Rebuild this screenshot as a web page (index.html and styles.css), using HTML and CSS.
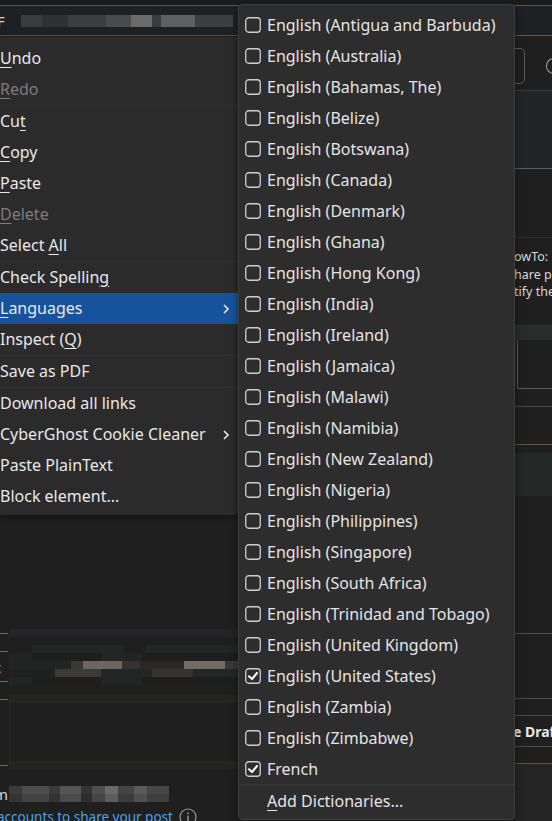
FILE: index.html
```html
<!DOCTYPE html>
<html>
<head>
    <link rel="stylesheet" href="styles.css">
</head>
<body>
    <div class="tabstrip"></div>
    <div class="urlbar">
        <span class="url-letter">F</span>
        <div class="blur url-blur"></div>
    </div>

    <div class="page">
        <!-- left part of the page, mostly under the menus -->
        <div class="pane-left">
            <div class="spacer" style="height: 592px;"></div>
            <div class="lrow h8">
                <span class="tick"></span>
                <div class="band"></div>
            </div>
            <div class="spacer" style="height: 8px;"></div>
            <div class="lrow blur-row">
                <div class="marks">
                    <span class="tick"></span>
                    <span class="cut-char">c</span>
                    <span class="tick"></span>
                </div>
                <div class="blur-grid">
                    <div class="blur row-a"></div>
                    <div class="blur row-b"></div>
                    <div class="blur row-c"></div>
                    <div class="blur row-d"></div>
                    <div class="blur row-b"></div>
                </div>
            </div>
            <div class="spacer" style="height: 10px;"></div>
            <div class="lrow h8">
                <span class="tick"></span>
                <div class="band warm"></div>
            </div>
            <div class="boxed"></div>
            <div class="lrow h8">
                <span class="tick"></span>
                <div class="band warm"></div>
            </div>
            <div class="spacer" style="height: 16px;"></div>
            <div class="lrow name-row">
                <span class="cut-char">m</span>
                <div class="blur name-blur"></div>
            </div>
            <div class="link-row">
                <span class="link">accounts to share your post</span>
                <svg class="info" width="18" height="18" viewBox="0 0 18 18">
                    <circle cx="9" cy="9" r="8" fill="none" stroke="#9a9a9a" stroke-width="1.2"/>
                    <rect x="8.3" y="7.5" width="1.4" height="6" fill="#9a9a9a"/>
                    <circle cx="9" cy="5.2" r="0.9" fill="#9a9a9a"/>
                </svg>
            </div>
        </div>

        <!-- right strip that shows beside the submenu -->
        <div class="pane-right">
            <div class="spacer" style="height: 11px;"></div>
            <div class="input-row">
                <div class="input-end"></div>
                <div class="circle-end"></div>
            </div>
            <div class="rline" style="height: 7px; border-color: #3a3a3a;"></div>
            <div class="rline shaded" style="height: 78px; border-color: #5b5b5b;"></div>
            <div class="rline" style="height: 69px; border-color: #2e2e2e;"></div>
            <div class="rline note" style="height: 88px; border-color: #2e2e2e;">
                <div>owTo:</div>
                <div>hare pi</div>
                <div>tify the</div>
            </div>
            <div class="rband" style="height: 14px;"></div>
            <div class="rbox"></div>
            <div class="rline" style="height: 18px; border-color: #4a4a4a;"></div>
            <div class="rline" style="height: 38px; border-color: #5a5346;"></div>
            <div class="spacer" style="height: 8px;"></div>
            <div class="rband" style="height: 43px; background-color: #262828;"></div>
            <div class="rline" style="height: 138px; border-color: #4d4d4d;"></div>
            <div class="rline" style="height: 65px; border-color: #4d4d4d;"></div>
            <div class="rline" style="height: 17px; border-color: #4d4d4d;"></div>
            <div class="rline draft" style="height: 31px; border-color: #4d4d4d;">e Draft</div>
            <div class="rline" style="height: 17px; border-color: #5a5346;"></div>
            <div class="rfill"></div>
        </div>
    </div>

    <!-- context menu -->
    <div class="menu">
        <div class="item"><u>U</u>ndo</div>
        <div class="item disabled"><u>R</u>edo</div>
        <div class="menu-sep"></div>
        <div class="item">Cu<u>t</u></div>
        <div class="item"><u>C</u>opy</div>
        <div class="item"><u>P</u>aste</div>
        <div class="item disabled"><u>D</u>elete</div>
        <div class="item">Select <u>A</u>ll</div>
        <div class="menu-sep"></div>
        <div class="item">Check Spellin<u>g</u></div>
        <div class="item active"><u>L</u>anguages
            <svg class="chevron" width="8" height="10" viewBox="0 0 8 10"><polyline points="2,1 6,5 2,9" fill="none" stroke="#e8e8e8" stroke-width="1.6"/></svg>
        </div>
        <div class="item">Inspect (<u>Q</u>)</div>
        <div class="menu-sep"></div>
        <div class="item">Save as PDF</div>
        <div class="menu-sep"></div>
        <div class="item">Download all links</div>
        <div class="item">CyberGhost Cookie Cleaner
            <svg class="chevron" width="8" height="10" viewBox="0 0 8 10"><polyline points="2,1 6,5 2,9" fill="none" stroke="#e8e8e8" stroke-width="1.6"/></svg>
        </div>
        <div class="item">Paste PlainText</div>
        <div class="item">Block element...</div>
    </div>

    <!-- languages submenu -->
    <div class="submenu" id="languages"></div>

    <script>
        const languages = [
            { name: "English (Antigua and Barbuda)" },
            { name: "English (Australia)" },
            { name: "English (Bahamas, The)" },
            { name: "English (Belize)" },
            { name: "English (Botswana)" },
            { name: "English (Canada)" },
            { name: "English (Denmark)" },
            { name: "English (Ghana)" },
            { name: "English (Hong Kong)" },
            { name: "English (India)" },
            { name: "English (Ireland)" },
            { name: "English (Jamaica)" },
            { name: "English (Malawi)" },
            { name: "English (Namibia)" },
            { name: "English (New Zealand)" },
            { name: "English (Nigeria)" },
            { name: "English (Philippines)" },
            { name: "English (Singapore)" },
            { name: "English (South Africa)" },
            { name: "English (Trinidad and Tobago)" },
            { name: "English (United Kingdom)" },
            { name: "English (United States)", checked: true },
            { name: "English (Zambia)" },
            { name: "English (Zimbabwe)" },
            { name: "French", checked: true }
        ];

        const tick = '<polyline points="4,8.3 7,11 12,5" fill="none" stroke="#f2f2f2" stroke-width="2.2" stroke-linecap="round" stroke-linejoin="round"/>';

        function buildSubmenu() {
            const menu = document.getElementById('languages');
            languages.forEach(lang => {
                const div = document.createElement('div');
                div.className = 'sub-item';
                div.innerHTML = `
                    <svg class="check" width="16" height="16" viewBox="0 0 16 16">
                        <rect x="0.75" y="0.75" width="14.5" height="14.5" rx="3" fill="none" stroke="#cfcfcf" stroke-width="1.3"/>
                        ${lang.checked ? tick : ''}
                    </svg>
                    <span>${lang.name}</span>
                `;
                menu.appendChild(div);
            });
            const more = document.createElement('div');
            more.className = 'sub-item more';
            more.innerHTML = '<span><u>A</u>dd Dictionaries...</span>';
            menu.appendChild(more);
        }

        buildSubmenu();
    </script>
</body>
</html>
```

FILE: styles.css
```css
body {
    margin: 0;
    padding: 0;
    width: 552px;
    height: 821px;
    overflow: hidden;
    background-color: #1f1f1f;
    font-family: "Noto Sans", sans-serif;
    color: #e6e6e6;
    position: relative;
}

.tabstrip {
    height: 5px;
    background-color: #1b1c1e;
    border-bottom: 1px solid #2e6288;
}

.urlbar {
    height: 29px;
    background-color: #1e2124;
    border-bottom: 1px solid #2e6288;
    display: flex;
    align-items: center;
    gap: 2px;
}

.url-letter {
    font-size: 15px;
    color: #cfcfcf;
    margin-left: -3px;
}

.blur {
    height: 12px;
}

.url-blur {
    width: 212px;
    margin-left: 14px;
    background: linear-gradient(90deg, #3a3c3e 0 10%, #2f3133 10% 22%, #3c3e40 22% 40%, #4a4b4c 40% 52%, #6b6b6b 52% 62%, #3a3b3d 62% 66%, #5e5f60 66% 82%, #3d3e40 82% 100%);
}

.page {
    display: grid;
    grid-template-columns: 514px 38px;
    padding-top: 1px;
}

.pane-left,
.pane-right {
    display: flex;
    flex-direction: column;
}

.spacer {
    flex-shrink: 0;
}

/* left pane */
.lrow {
    display: flex;
    align-items: center;
    flex-shrink: 0;
}

.h8 { height: 8px; }

.tick {
    width: 8px;
    height: 1px;
    background-color: #6a6a6a;
    margin-right: 1px;
    flex-shrink: 0;
}

.band {
    flex: 1;
    height: 8px;
    background-color: #232626;
}

.band.warm {
    background-color: #252521;
}

.blur-row {
    height: 40px;
    align-items: stretch;
}

.marks {
    width: 9px;
    display: flex;
    flex-direction: column;
    justify-content: space-between;
    padding: 6px 0 3px 0;
    box-sizing: border-box;
}

.cut-char {
    width: 9px;
    font-size: 15px;
    line-height: 16px;
    color: #d8d8d8;
    text-indent: -6px;
    overflow: hidden;
    flex-shrink: 0;
}

.blur-grid {
    display: flex;
    flex-direction: column;
}

.blur-grid .blur {
    height: 8px;
    width: 230px;
}

.row-a {
    background: linear-gradient(90deg, #1f1f1f 0 10%, #242626 10% 50%, #1f1f1f 50% 59%, #242626 59% 100%);
}

.row-b {
    background: linear-gradient(90deg, #232525 0 10%, #1e1e1e 10% 40%, #232525 40% 58%, #1e1e1e 58% 100%);
}

.row-c {
    background: linear-gradient(90deg, #232525 0 27%, #3a3935 27% 32%, #6b665e 32% 49%, #35332f 49% 57%, #2a2928 57% 76%, #706b64 76% 94%, #3a3834 94% 100%);
}

.row-d {
    background: linear-gradient(90deg, #1f2020 0 20%, #3c3a36 20% 40%, #242525 40% 62%, #35332f 62% 80%, #252626 80% 100%);
}

.boxed {
    height: 58px;
    margin-left: 9px;
    border-left: 1px solid #2a2a2a;
    flex-shrink: 0;
}

.name-row {
    height: 18px;
    align-items: center;
}

.name-blur {
    width: 160px;
    height: 16px;
    background: linear-gradient(180deg, transparent 0 50%, rgba(0, 0, 0, 0.12) 50% 100%),
        linear-gradient(90deg, #3b3b3b 0 8%, #4c4c4c 8% 25%, #3a3a3a 25% 32%, #555 32% 45%, #333 45% 52%, #4e4e4e 52% 60%, #6a6a6a 60% 68%, #444 68% 78%, #5a5a5a 78% 86%, #474747 86% 100%);
}

.link-row {
    display: flex;
    align-items: center;
    gap: 6px;
    margin-top: 5px;
}

.link {
    font-size: 13.5px;
    color: #4ea3e4;
    margin-left: -3px;
    line-height: 18px;
}

.info {
    flex-shrink: 0;
}

/* right pane */
.rline {
    flex-shrink: 0;
    box-sizing: border-box;
    border-bottom: 1px solid #444;
}

.shaded {
    background-color: #222426;
}

.note {
    padding-top: 10px;
    font-size: 12.5px;
    line-height: 17.5px;
    color: #d6d6d6;
    white-space: nowrap;
    overflow: hidden;
}

.rband {
    flex-shrink: 0;
    background-color: #2a2b2b;
}

.rbox {
    height: 49px;
    margin-left: 3px;
    box-sizing: border-box;
    border-left: 1px solid #5a5a5a;
    border-bottom: 1px solid #5a5a5a;
    flex-shrink: 0;
}

.draft {
    display: flex;
    align-items: center;
    font-size: 14px;
    font-weight: bold;
    color: #e8e8e8;
    white-space: nowrap;
    overflow: hidden;
    text-indent: -1px;
}

.rfill {
    flex: 1;
    background-color: #252525;
}

.input-row {
    height: 36px;
    display: flex;
    align-items: center;
    justify-content: space-between;
    flex-shrink: 0;
}

.input-end {
    width: 16px;
    height: 36px;
    box-sizing: border-box;
    margin-left: -5px;
    border: 1px solid #5c5c5c;
    border-radius: 5px;
}

.circle-end {
    width: 8px;
    height: 16px;
    box-sizing: border-box;
    border: 1.5px solid #a0a0a0;
    border-right: none;
    border-radius: 8px 0 0 8px;
    margin-right: -2px;
}

/* context menu */
.menu {
    position: absolute;
    left: 0;
    top: 37px;
    width: 238px;
    height: 478px;
    box-sizing: border-box;
    padding: 6px 0 3px 0;
    background-color: #2b2b2b;
    border-radius: 0 0 5px 0;
    box-shadow: 0 2px 6px rgba(0, 0, 0, 0.4);
}

.menu-sep {
    height: 1px;
    background-color: #303030;
}

.item {
    height: 31px;
    line-height: 31px;
    font-size: 16px;
    color: #e8e8e8;
    white-space: nowrap;
    position: relative;
}

.item.disabled {
    color: #7c7c7c;
}

.item.active {
    background-color: #17539c;
}

.item u {
    text-underline-offset: 3px;
}

.chevron {
    position: absolute;
    right: 8px;
    top: 11px;
}

/* languages submenu */
.submenu {
    position: absolute;
    left: 238px;
    top: 4px;
    width: 277px;
    height: 816px;
    box-sizing: border-box;
    padding: 4px 0 2px 0;
    background-color: #2d2d2d;
    border: 1px solid #3e3e3e;
    border-radius: 4px;
    box-shadow: 0 2px 8px rgba(0, 0, 0, 0.45);
}

.sub-item {
    height: 31px;
    display: flex;
    align-items: center;
    gap: 6px;
    padding-left: 6px;
    font-size: 16px;
    color: #e4e4e4;
    white-space: nowrap;
}

.sub-item.more {
    border-top: 1px solid #383838;
    padding-left: 28px;
}

.sub-item u {
    text-underline-offset: 3px;
}

.check {
    flex-shrink: 0;
}
```
